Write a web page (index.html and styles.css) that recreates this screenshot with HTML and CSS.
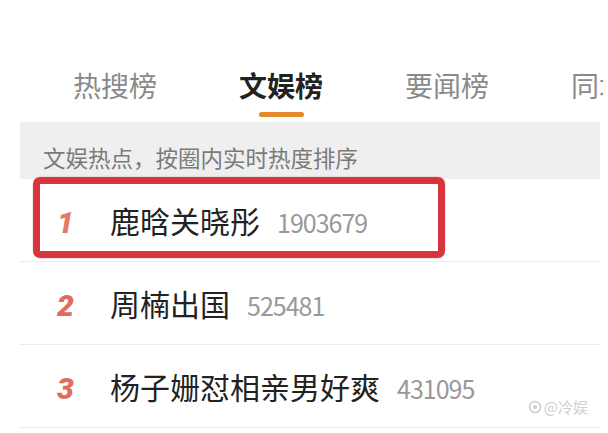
FILE: index.html
```html
<!DOCTYPE html>
<html lang="zh-CN">
<head>
  <meta charset="UTF-8" />
  <meta name="viewport" content="width=device-width, initial-scale=1.0"/>
  <title>文娱榜</title>
  <link rel="stylesheet" href="styles.css">
</head>
<body>
  <div class="tabs">
    <div class="tab">热搜榜</div>
    <div class="tab active">文娱榜<span class="bar"></span></div>
    <div class="tab">要闻榜</div>
    <div class="tab">同城榜</div>
  </div>
  <div class="notice">文娱热点，按圈内实时热度排序</div>
  <ul class="list">
    <li class="row">
      <span class="rank first">1</span>
      <span class="title">鹿晗关晓彤</span>
      <span class="heat">1903679</span>
      <span class="mark"></span>
    </li>
    <li class="row">
      <span class="rank">2</span>
      <span class="title">周楠出国</span>
      <span class="heat">525481</span>
    </li>
    <li class="row">
      <span class="rank">3</span>
      <span class="title">杨子姗怼相亲男好爽</span>
      <span class="heat">431095</span>
      <span class="watermark">
        <svg width="14" height="14" viewBox="0 0 14 14">
          <circle cx="7" cy="7" r="5.5" fill="none" stroke="#d0d0d0" stroke-width="1.6"/>
          <circle cx="7" cy="7" r="2" fill="#d0d0d0"/>
        </svg>@冷娱
      </span>
    </li>
  </ul>
</body>
</html>
```

FILE: styles.css
```css
* { box-sizing: border-box; }
body {
  margin: 0;
  width: 608px;
  height: 433px;
  overflow: hidden;
  background: #fff;
  font-family: "Noto Sans CJK SC", "Noto Sans", sans-serif;
}
.tabs {
  display: flex;
  align-items: flex-start;
  gap: 82px;
  width: 603px;
  height: 122px;
  padding: 70px 0 0 73px;
  overflow: hidden;
  white-space: nowrap;
}
.tab {
  display: flex;
  flex-direction: column;
  align-items: center;
  font-size: 28px;
  line-height: 30px;
  color: #8a8a8a;
}
.tab.active {
  color: #222;
  font-weight: 700;
}
.bar {
  width: 45px;
  height: 5px;
  margin-top: 12px;
  border-radius: 3px;
  background: #e3882b;
}
.notice {
  margin: 0 8px 0 20px;
  height: 57px;
  padding: 24px 0 0 23px;
  background: #efefef;
  color: #7a7a7a;
  font-size: 22.5px;
  line-height: 22px;
}
.list {
  list-style: none;
  margin: 0 8px 0 20px;
  padding: 0;
}
.row {
  position: relative;
  display: flex;
  align-items: baseline;
  height: 83px;
  padding: 24px 0 0 37px;
  border-bottom: 1px solid #ececec;
}
.rank {
  width: 53px;
  font-family: Roboto, sans-serif;
  font-style: italic;
  font-weight: 900;
  font-size: 30px;
  line-height: 34px;
  color: #e06c5d;
}
.rank.first { color: #e47a64; }
.title {
  font-size: 30px;
  line-height: 34px;
  color: #222;
}
.heat {
  margin-left: 17px;
  font-size: 25px;
  letter-spacing: -1px;
  color: #999;
}
.mark {
  position: absolute;
  left: 13px;
  top: -2px;
  width: 412px;
  height: 81px;
  border: 7px solid #d8343e;
  border-radius: 7px;
  box-shadow: 0 0 2px rgba(216, 52, 62, 0.4);
}
.watermark {
  position: absolute;
  right: 12px;
  bottom: 10px;
  display: flex;
  align-items: center;
  gap: 2px;
  font-size: 15px;
  color: #cfcfcf;
}
```
